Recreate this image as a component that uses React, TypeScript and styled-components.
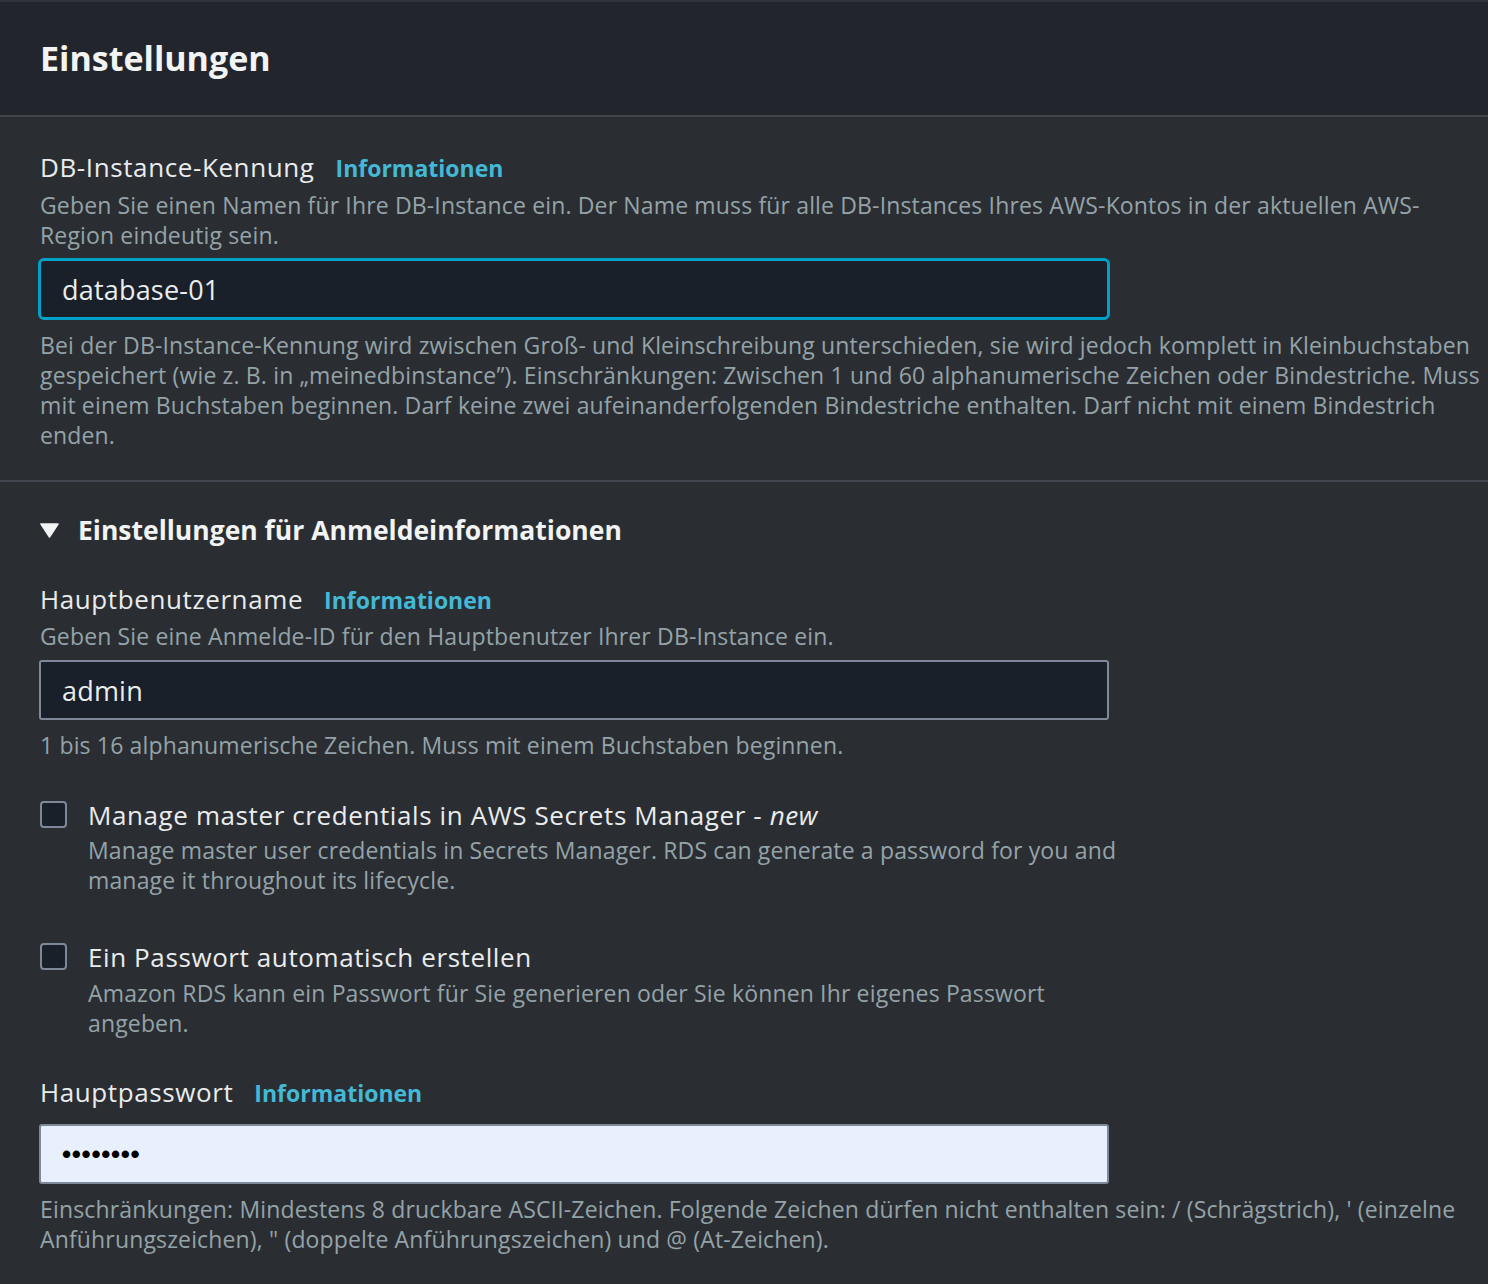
import React from 'react';
import styled, { createGlobalStyle } from 'styled-components';

const Global = createGlobalStyle`
  html, body {
    margin: 0;
    padding: 0;
    background: #2a2e33;
  }
  body {
    font-family: 'Open Sans', 'Noto Sans', sans-serif;
    color: #d5dbdb;
  }
`;

const Page = styled.div`
  width: 1488px;
  min-height: 1284px;
  background: #2a2e33;
`;

const Header = styled.header`
  background: #22262c;
  border-top: 2px solid #30353b;
  border-bottom: 2px solid #41464e;
  padding: 32px 40px 33px;
`;

const Title = styled.h2`
  margin: 0;
  font-size: 34px;
  line-height: 48px;
  font-weight: 700;
  color: #f2f3f3;
`;

const Section = styled.section<{ $divider?: boolean }>`
  padding: 0 6px 0 40px;
  border-bottom: ${p => (p.$divider ? '2px solid #41464e' : 'none')};
`;

const Field = styled.div<{ $top: number; $bottom?: number }>`
  padding-top: ${p => p.$top}px;
  padding-bottom: ${p => p.$bottom ?? 0}px;
`;

const LabelRow = styled.div`
  display: flex;
  align-items: baseline;
  gap: 21px;
`;

const Label = styled.label`
  font-size: 26px;
  line-height: 40px;
  letter-spacing: 0.6px;
  color: #e9ebed;
`;

const InfoLink = styled.a`
  font-size: 23px;
  font-weight: 700;
  color: #44b9d6;
  text-decoration: none;
`;

const Desc = styled.p<{ $mt?: number }>`
  margin: ${p => p.$mt ?? 0}px 0 0;
  font-size: 23px;
  line-height: 30px;
  letter-spacing: 0.15px;
  color: #95a3a8;
`;

const Input = styled.div<{ $focus?: boolean; $autofill?: boolean }>`
  box-sizing: border-box;
  width: ${p => (p.$focus ? 1072 : 1070)}px;
  height: ${p => (p.$focus ? 62 : 60)}px;
  margin-left: ${p => (p.$focus ? -2 : -1)}px;
  border: ${p => (p.$focus ? '3px solid #00a1c9' : '2px solid #7d8998')};
  border-radius: ${p => (p.$focus ? 6 : 3)}px;
  background: ${p => (p.$autofill ? '#e8f0fe' : '#1a2029')};
  color: ${p => (p.$autofill ? '#000' : '#eaeded')};
  display: flex;
  align-items: center;
  padding-left: 21px;
  font-size: 27px;
  letter-spacing: 0.2px;
`;

const Dots = styled.span`
  font-family: 'Liberation Sans', sans-serif;
  font-size: 26px;
  font-weight: 700;
  letter-spacing: 0.7px;
`;

const Expand = styled.div`
  display: flex;
  align-items: center;
  gap: 19px;
  padding-top: 29px;
`;

const Caret = styled.svg`
  flex: none;
  width: 19px;
  height: 15px;
`;

const ExpandTitle = styled.h3`
  margin: 0;
  font-size: 26.5px;
  line-height: 38px;
  font-weight: 700;
  color: #f2f3f3;
`;

const CheckRow = styled.div<{ $top: number }>`
  display: flex;
  gap: 21px;
  padding-top: ${p => p.$top}px;
  max-width: 1088px;
`;

const Box = styled.span`
  flex: none;
  box-sizing: border-box;
  width: 27px;
  height: 27px;
  margin-top: 5px;
  border: 2px solid #7d8998;
  border-radius: 4px;
  background: #1a2029;
`;

const CheckText = styled.div`
  display: flex;
  flex-direction: column;
`;

const CheckLabel = styled.span`
  font-size: 26px;
  line-height: 38px;
  letter-spacing: 0.6px;
  color: #e9ebed;
  em {
    font-style: italic;
  }
`;

export default function App() {
  return (
    <Page>
      <Global />
      <Header>
        <Title>Einstellungen</Title>
      </Header>

      <Section $divider>
        <Field $top={30} $bottom={30}>
          <LabelRow>
            <Label>DB-Instance-Kennung</Label>
            <InfoLink>Informationen</InfoLink>
          </LabelRow>
          <Desc $mt={3}>
            Geben Sie einen Namen für Ihre DB-Instance ein. Der Name muss für alle DB-Instances Ihres
            AWS-Kontos in der aktuellen AWS-Region eindeutig sein.
          </Desc>
          <Field $top={8}>
            <Input $focus>database-01</Input>
          </Field>
          <Desc $mt={10}>
            Bei der DB-Instance-Kennung wird zwischen Groß- und Kleinschreibung unterschieden, sie wird
            jedoch komplett in Kleinbuchstaben gespeichert (wie z. B. in „meinedbinstance”).
            Einschränkungen: Zwischen 1 und 60 alphanumerische Zeichen oder Bindestriche. Muss mit
            einem Buchstaben beginnen. Darf keine zwei aufeinanderfolgenden Bindestriche enthalten.
            Darf nicht mit einem Bindestrich enden.
          </Desc>
        </Field>
      </Section>

      <Section>
        <Expand>
          <Caret viewBox="0 0 19 15">
            <path d="M1 1 H18 L9.5 14 Z" fill="#f2f3f3" stroke="#f2f3f3" strokeWidth="1.5" strokeLinejoin="round" />
          </Caret>
          <ExpandTitle>Einstellungen für Anmeldeinformationen</ExpandTitle>
        </Expand>

        <Field $top={30}>
          <LabelRow>
            <Label>Hauptbenutzername</Label>
            <InfoLink>Informationen</InfoLink>
          </LabelRow>
          <Desc $mt={2}>Geben Sie eine Anmelde-ID für den Hauptbenutzer Ihrer DB-Instance ein.</Desc>
          <Field $top={9}>
            <Input>admin</Input>
          </Field>
          <Desc $mt={10}>1 bis 16 alphanumerische Zeichen. Muss mit einem Buchstaben beginnen.</Desc>
        </Field>

        <CheckRow $top={36}>
          <Box />
          <CheckText>
            <CheckLabel>
              Manage master credentials in AWS Secrets Manager - <em>new</em>
            </CheckLabel>
            <Desc $mt={1}>
              Manage master user credentials in Secrets Manager. RDS can generate a password for you
              and manage it throughout its lifecycle.
            </Desc>
          </CheckText>
        </CheckRow>

        <CheckRow $top={43}>
          <Box />
          <CheckText>
            <CheckLabel>Ein Passwort automatisch erstellen</CheckLabel>
            <Desc $mt={2}>
              Amazon RDS kann ein Passwort für Sie generieren oder Sie können Ihr eigenes Passwort
              angeben.
            </Desc>
          </CheckText>
        </CheckRow>

        <Field $top={34}>
          <LabelRow>
            <Label>Hauptpasswort</Label>
            <InfoLink>Informationen</InfoLink>
          </LabelRow>
          <Field $top={12}>
            <Input $autofill>
              <Dots>••••••••</Dots>
            </Input>
          </Field>
          <Desc $mt={10}>
            Einschränkungen: Mindestens 8 druckbare ASCII-Zeichen. Folgende Zeichen dürfen nicht
            enthalten sein: / (Schrägstrich), ' (einzelne Anführungszeichen), " (doppelte
            Anführungszeichen) und @ (At-Zeichen).
          </Desc>
        </Field>
      </Section>
    </Page>
  );
}
